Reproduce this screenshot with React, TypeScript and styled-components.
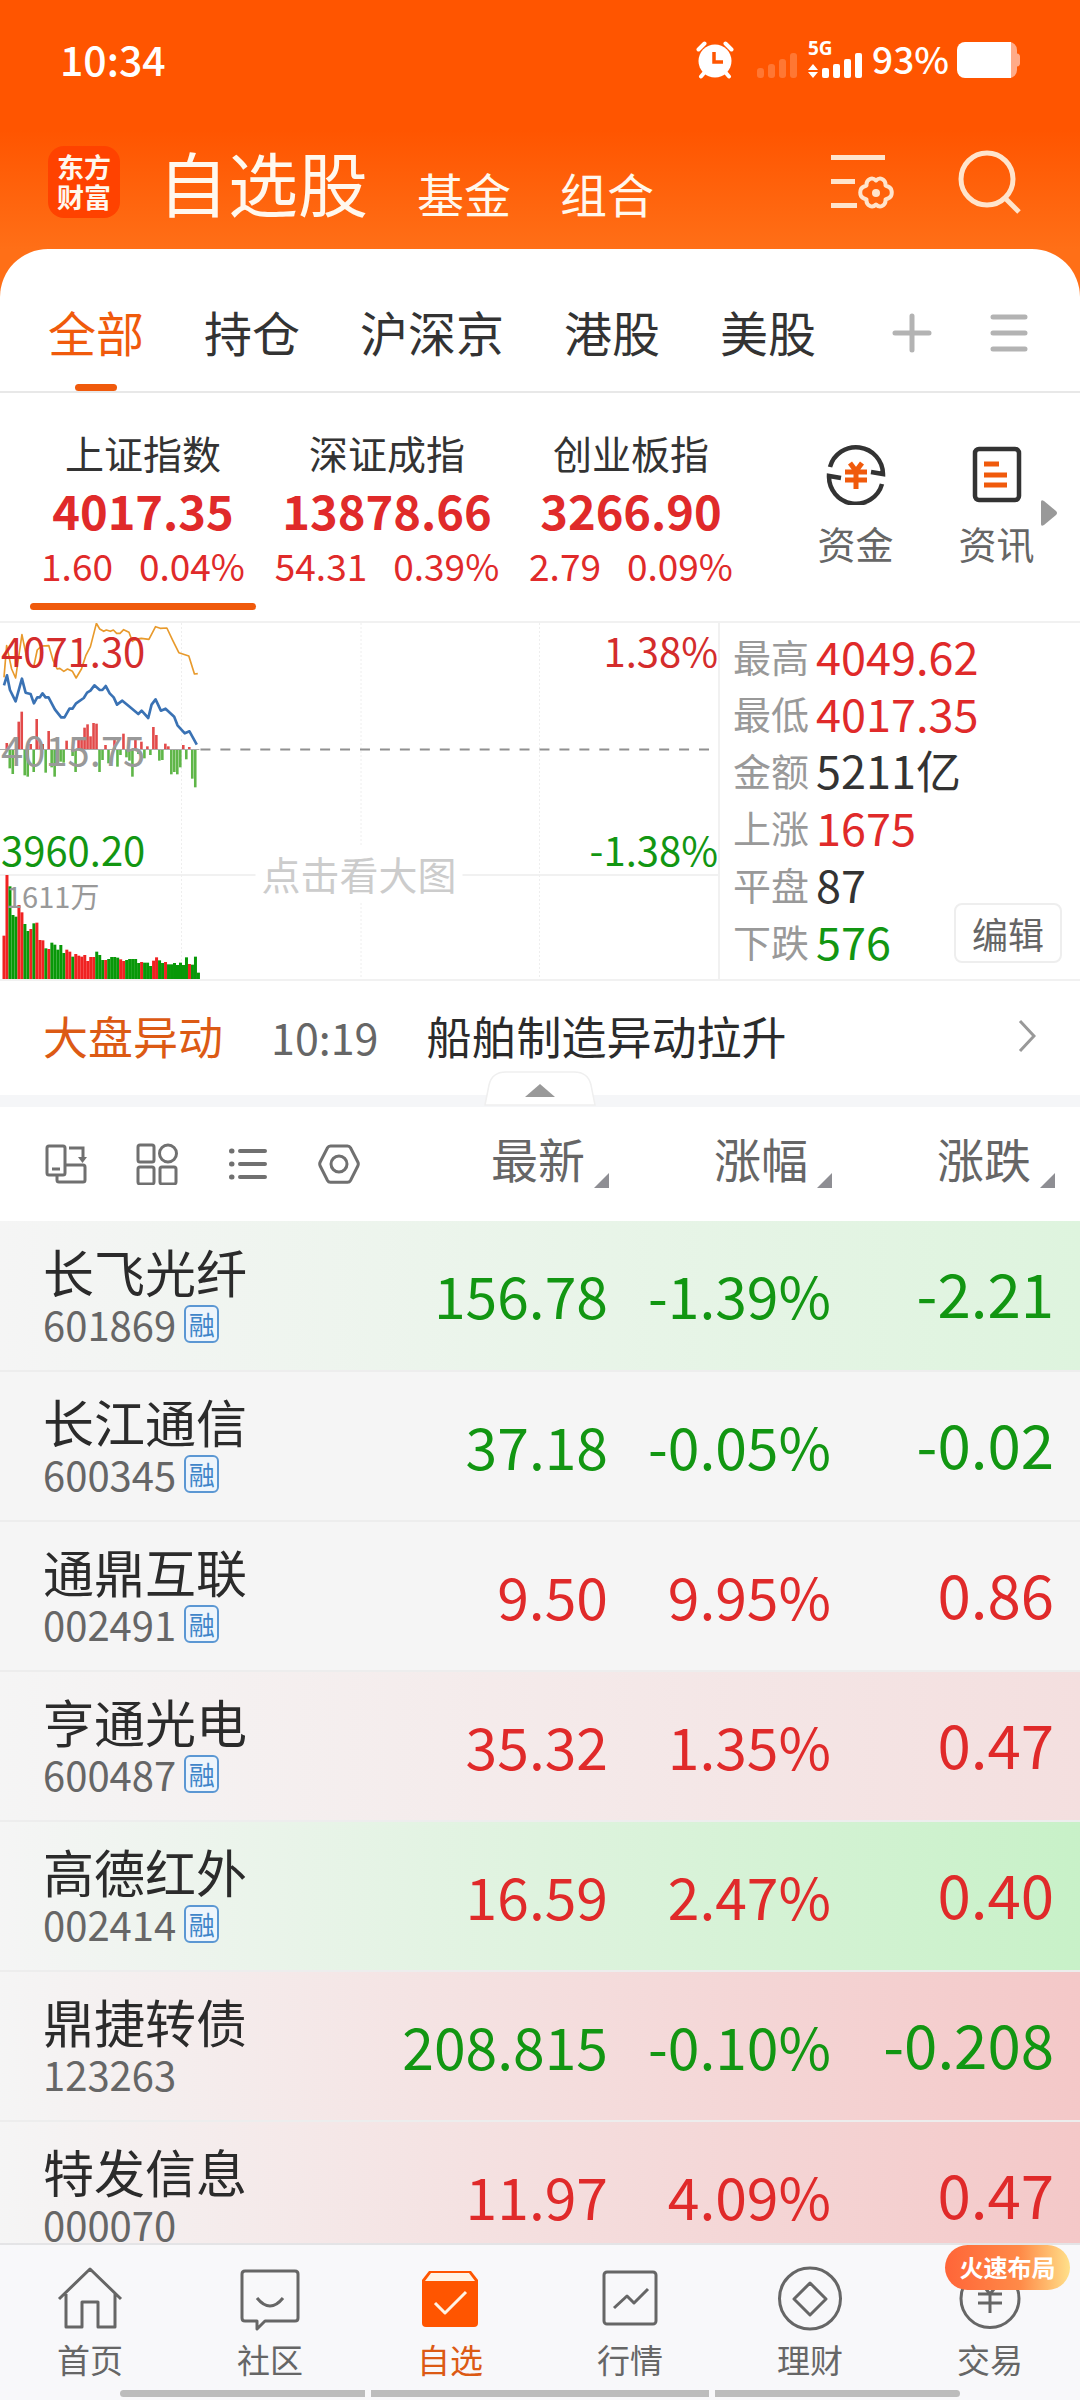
import React from "react";
import styled, { createGlobalStyle } from "styled-components";

const RED = "#e02a2a";
const GREEN = "#129612";
const ORANGE = "#f05a0c";

const GlobalStyle = createGlobalStyle`
  * { box-sizing: border-box; }
  body {
    margin: 0;
    font-family: "Noto Sans CJK SC", "Noto Sans", sans-serif;
    color: #2b2b2b;
  }
  button {
    margin: 0;
    padding: 0;
    border: 0;
    background: none;
    font: inherit;
    color: inherit;
    cursor: pointer;
  }
  a { color: inherit; text-decoration: none; }
  svg { display: block; flex-shrink: 0; }
`;

const Screen = styled.div`
  display: flex;
  flex-direction: column;
  height: 100vh;
  overflow: hidden;
  background: linear-gradient(#ff5500 0, #ff5500 130px, #ff6f17 249px, #ff6f17 300px, #fff 301px);
`;

const StatusBar = styled.div`
  display: flex;
  align-items: center;
  justify-content: space-between;
  flex-shrink: 0;
  height: 120px;
  padding: 0 60px;
  color: #fff;
  font-weight: 500;
  line-height: 60px;
`;

const StatusText = styled.span<{ $large?: boolean }>`
  padding-bottom: 5px;
  font-size: ${(p) => (p.$large ? 41 : 37)}px;
`;

const StatusIcons = styled.div`
  display: flex;
  align-items: center;
  gap: 8px;
  & > svg:first-child { margin-right: 15px; }
`;

const TitleBar = styled.header`
  display: flex;
  align-items: center;
  flex-shrink: 0;
  height: 129px;
  padding: 0 58px 6px 48px;
  color: #fff8ee;
`;

const Logo = styled.div`
  display: flex;
  align-items: center;
  justify-content: center;
  width: 72px;
  height: 72px;
  border-radius: 16px;
  background: #ff4200;
  font-size: 27px;
  font-weight: 700;
  line-height: 30px;
  text-align: center;
`;

const Sections = styled.nav`
  display: flex;
  flex: 1;
  align-items: flex-end;
  gap: 49px;
  margin-left: 38px;
`;

const SectionLink = styled.a<{ $active?: boolean }>`
  font-size: ${(p) => (p.$active ? 70 : 47)}px;
  line-height: ${(p) => (p.$active ? 90 : 68)}px;
`;

const HeaderActions = styled.div`
  display: flex;
  align-items: center;
  gap: 64px;
`;

const Card = styled.main`
  flex: 1;
  min-height: 0;
  overflow-y: auto;
  scrollbar-width: none;
  background: #fff;
  border-radius: 48px 48px 0 0;
`;

const Tabs = styled.nav`
  display: flex;
  align-items: stretch;
  height: 144px;
  padding: 0 52px 0 48px;
  gap: 60px;
  border-bottom: 2px solid #e8e8e8;
  font-size: 48px;
`;

const Tab = styled.button<{ $active?: boolean }>`
  display: flex;
  flex-direction: column;
  align-items: center;
  justify-content: flex-end;
  gap: 18px;
  line-height: 70px;
  white-space: nowrap;
  color: ${(p) => (p.$active ? ORANGE : "#333")};
  &::after {
    content: "";
    width: 42px;
    height: 7px;
    border-radius: 4px;
    background: ${(p) => (p.$active ? ORANGE : "transparent")};
  }
`;

const TabTools = styled.div`
  display: flex;
  flex: 1;
  align-items: center;
  justify-content: flex-end;
  gap: 58px;
  padding-top: 25px;
`;

const Overview = styled.section`
  display: grid;
  grid-template-columns: repeat(3, minmax(0, 244fr)) minmax(0, 327fr);
  height: 228px;
  padding-left: 21px;
`;

const IndexCard = styled.button<{ $active?: boolean }>`
  display: flex;
  flex-direction: column;
  align-items: center;
  justify-content: flex-start;
  padding-top: 31px;
  color: ${RED};
  &::after {
    content: "";
    width: 226px;
    height: 7px;
    margin-top: 12px;
    border-radius: 4px;
    background: ${(p) => (p.$active ? ORANGE : "transparent")};
  }
`;

const IndexName = styled.span`
  font-size: 39px;
  line-height: 56px;
  color: #333;
`;

const IndexValue = styled.strong`
  font-size: 47px;
  font-weight: 700;
  line-height: 59px;
`;

const IndexChange = styled.span`
  display: flex;
  gap: 26px;
  font-size: 37px;
  line-height: 52px;
  white-space: nowrap;
`;

const Shortcuts = styled.div`
  display: flex;
  padding-left: 32px;
`;

const Shortcut = styled.button`
  display: flex;
  width: 141px;
  flex-direction: column;
  align-items: center;
  justify-content: flex-start;
  padding-top: 52px;
  gap: 11px;
  font-size: 38px;
  line-height: 54px;
  color: #666;
`;

const MoreShortcuts = styled.button`
  display: flex;
  align-items: center;
  width: 16px;
  margin-left: -26px;
  padding-top: 12px;
`;

const MarketPanel = styled.section`
  display: grid;
  grid-template-columns: minmax(0, 2fr) minmax(0, 1fr);
  border-top: 2px solid #f1f1f1;
  border-bottom: 2px solid #f1f1f1;
`;

const ChartBox = styled.div`
  position: relative;
  height: 356px;
  border-right: 2px solid #f1f1f1;
`;

const ChartLabel = styled.span<{ $top: number; $right?: boolean; $tone: string; $small?: boolean }>`
  position: absolute;
  top: ${(p) => p.$top}px;
  ${(p) => (p.$right ? "right: 0;" : p.$small ? "left: 6px;" : "left: 1px;")}
  font-size: ${(p) => (p.$small ? 29 : 40)}px;
  line-height: 48px;
  color: ${(p) => p.$tone};
`;

const ChartHint = styled.span`
  position: absolute;
  top: 222px;
  left: 50%;
  padding: 0 6px;
  transform: translateX(-50%);
  background: #fff;
  font-size: 39px;
  line-height: 56px;
  color: #ccc;
  white-space: nowrap;
`;

const Stats = styled.div`
  display: flex;
  justify-content: space-between;
  padding: 4px 18px 8px 13px;
`;

const StatList = styled.dl`
  margin: 0;
`;

const StatRow = styled.div`
  display: flex;
  align-items: center;
  gap: 7px;
  height: 57px;
  white-space: nowrap;
`;

const StatName = styled.dt`
  font-size: 38px;
  color: #999;
`;

const StatValue = styled.dd<{ $tone: string }>`
  margin: 0;
  font-size: 45px;
  line-height: 57px;
  color: ${(p) => p.$tone};
`;

const EditButton = styled.button`
  align-self: flex-end;
  width: 108px;
  height: 60px;
  margin: 0 0 8px -60px;
  border: 2px solid #eee;
  border-radius: 8px;
  background: #fff;
  font-size: 36px;
  line-height: 54px;
  color: #666;
`;

const News = styled.section`
  position: relative;
  display: flex;
  align-items: center;
  height: 126px;
  padding: 0 44px 4px 43px;
  border-bottom: 12px solid #f5f6f8;
  font-size: 45px;
  line-height: 64px;
`;

const NewsTopic = styled.span`
  color: #dc5a14;
`;

const NewsTime = styled.time`
  margin: 0 48px;
  font-size: 43px;
  color: #666;
`;

const NewsTitle = styled.a`
  flex: 1;
`;

const CollapseButton = styled.button`
  position: absolute;
  left: 50%;
  bottom: -11px;
  transform: translateX(-50%);
`;

const Table = styled.table`
  width: 100%;
  table-layout: fixed;
  border-collapse: collapse;
`;

const ToolCell = styled.th`
  padding: 0 0 0 45px;
  text-align: left;
`;

const Tools = styled.div`
  display: flex;
  align-items: center;
  gap: 49px;
`;

const HeadCell = styled.th<{ $last?: boolean }>`
  width: ${(p) => (p.$last ? 248 : 223)}px;
  height: 114px;
  padding: 0 ${(p) => (p.$last ? 25 : 0)}px 12px 0;
  font-weight: 400;
`;

const SortButton = styled.button`
  display: flex;
  width: 100%;
  align-items: flex-end;
  justify-content: flex-end;
  gap: 9px;
  font-size: 47px;
  line-height: 60px;
  color: #666;
  &::after {
    content: "";
    border: solid transparent;
    border-width: 0 0 15px 15px;
    border-bottom-color: #8e8e93;
  }
`;

const Row = styled.tr<{ $tint: string }>`
  height: 150px;
  border-bottom: 2px solid #ededed;
  background: linear-gradient(90deg, #f5f5f5, ${(p) => p.$tint});
`;

const NameCell = styled.td`
  padding: 0 0 4px 43px;
  white-space: nowrap;
`;

const StockName = styled.div`
  font-size: 51px;
  line-height: 60px;
`;

const StockCode = styled.div`
  display: flex;
  align-items: center;
  gap: 8px;
  font-size: 40px;
  line-height: 46px;
  color: #666;
`;

const MarginTag = styled.span`
  display: flex;
  align-items: center;
  justify-content: center;
  width: 35px;
  height: 38px;
  border: 2px solid #5b97d3;
  border-radius: 6px;
  background: #eef5fc;
  font-size: 26px;
  line-height: 30px;
  color: #3f85c9;
`;

const NumCell = styled.td<{ $up: boolean; $last?: boolean }>`
  padding: ${(p) => (p.$last ? "0 26px 7px 0" : "0 1px 3px 0")};
  font-size: ${(p) => (p.$last ? 60 : 57)}px;
  line-height: 72px;
  text-align: right;
  white-space: nowrap;
  color: ${(p) => (p.$up ? RED : GREEN)};
`;

const BottomNav = styled.nav`
  position: relative;
  display: flex;
  flex-shrink: 0;
  height: 157px;
  border-top: 2px solid #e4e4e6;
  background: #f8f8fa;
`;

const NavItem = styled.a<{ $active?: boolean }>`
  position: relative;
  display: flex;
  flex: 1;
  flex-direction: column;
  align-items: center;
  gap: 5px;
  padding-top: 20px;
  font-size: 33px;
  line-height: 46px;
  color: ${(p) => (p.$active ? "#dc5a14" : "#666")};
`;

const Promo = styled.span`
  position: absolute;
  top: 0;
  right: 10px;
  width: 125px;
  height: 45px;
  border-radius: 23px;
  background: linear-gradient(90deg, #ff6538, #ff8a48 60%, #ffe08a);
  font-size: 24px;
  font-weight: 700;
  line-height: 43px;
  text-align: center;
  color: #fff;
`;

const GestureBar = styled.div`
  position: absolute;
  right: 120px;
  bottom: 3px;
  left: 120px;
  display: grid;
  grid-template-columns: 245fr 337fr 245fr;
  gap: 6px;
  height: 7px;
  overflow: hidden;
  border-radius: 4px;
`;

const GesturePart = styled.span`
  background: #bcbcbc;
`;

const AlarmIcon = () => (
  <svg width="38" height="38" viewBox="0 0 38 38">
    <circle cx="19" cy="20" r="16.5" fill="#fff" />
    <path d="M2.500 8.500l6-6M35.500 8.500l-6-6" stroke="#fff" strokeWidth="4" strokeLinecap="round" />
    <path d="M8 32l-3 3.500M30 32l3 3.500" stroke="#fff" strokeWidth="4" strokeLinecap="round" />
    <path d="M18 11v10h9" fill="none" stroke="#ff5500" strokeWidth="3.500" />
  </svg>
);

const SignalIcon = () => (
  <svg width="107" height="54" viewBox="0 -8 107 54">
    <g fill="#fff" fillOpacity=".2">
      <rect x="0" y="27" width="7" height="10" rx="3" />
      <rect x="11" y="23" width="7" height="14" rx="3" />
      <rect x="22" y="18" width="7" height="19" rx="3" />
      <rect x="33" y="12" width="7" height="25" rx="3" />
    </g>
    <g fill="#fff">
      <text x="51" y="14" fontSize="19" fontWeight="700" fontFamily="Open Sans, sans-serif">5G</text>
      <path d="M51 29l5-6 5 6zM51 31l5 6 5-6z" />
      <rect x="65" y="27" width="7" height="10" rx="2" />
      <rect x="76" y="23" width="7" height="14" rx="2" />
      <rect x="87" y="18" width="7" height="19" rx="2" />
      <rect x="98" y="12" width="7" height="25" rx="2" />
    </g>
  </svg>
);

const BatteryIcon = () => (
  <svg width="63" height="36" viewBox="0 0 63 36">
    <path d="M48 0h4a8 8 0 0 1 8 8v3.500c2 0 3 1.500 3 3v7c0 1.500-1 3-3 3V28a8 8 0 0 1-8 8h-4z" fill="#ffab88" />
    <path d="M8 0h46v36H8a8 8 0 0 1-8-8V8a8 8 0 0 1 8-8z" fill="#fff" />
  </svg>
);

const ListGearIcon = () => (
  <svg width="63" height="58" viewBox="0 0 63 58" fill="none" stroke="#ffe4cc" strokeWidth="5">
    <path d="M0 4.500h54M0 28.500h24M0 52.500h26" />
    <path
      d="M45 27.500q3-3 6-1.500 4 2 3.500 6.500 4.500 1.500 5.500 3.500 1.500 4 0 7-1 2-5.500 3.500.5 4.500-3.500 6.500-3 1.500-6-1.500-3 3-6 1.500-4-2-3.500-6.500-4.500-1.500-5.500-3.500-1.500-3.500 0-7 1-2 5.500-3.500-.5-4.500 3.500-6.500 3-1.500 6 1.500z"
      strokeWidth="4"
      strokeLinejoin="round"
    />
    <circle cx="45" cy="40" r="4" fill="#ffe4cc" stroke="none" />
  </svg>
);

const SearchIcon = () => (
  <svg width="64" height="64" viewBox="0 0 64 64" fill="none" stroke="#ffe4cc" strokeWidth="5">
    <circle cx="29" cy="29" r="26" />
    <path d="M47 48l14 14" />
  </svg>
);

const PlusIcon = () => (
  <svg width="40" height="40" viewBox="0 0 40 40" stroke="#b3b3b3" strokeWidth="5" strokeLinecap="round">
    <path d="M20 3v34M3 20h34" />
  </svg>
);

const MenuIcon = () => (
  <svg width="38" height="40" viewBox="0 0 38 40" stroke="#b3b3b3" strokeWidth="5" strokeLinecap="round">
    <path d="M3 4h32M3 20h32M3 36h32" />
  </svg>
);

const FundsIcon = () => (
  <svg width="60" height="60" viewBox="0 0 60 60" fill="none" stroke="#333" strokeWidth="4.500">
    <path d="M4 22A27 27 0 0 1 57 29L45 27" />
    <path d="M56 39A27 27 0 0 1 3 31l12 2" />
    <path d="M24 18l6 8 6-8M19 27h22M19 35h22M30 26v18" stroke={ORANGE} strokeWidth="5" />
  </svg>
);

const ArticleIcon = () => (
  <svg width="60" height="60" viewBox="0 0 60 60" fill="none">
    <rect x="8" y="4" width="44" height="51" rx="4" stroke="#333" strokeWidth="4.500" />
    <path d="M17 19h15M17 30h23M17 40h23" stroke={ORANGE} strokeWidth="5" />
  </svg>
);

const DevicesIcon = () => (
  <svg width="42" height="42" viewBox="0 0 42 42" fill="none" stroke="#707070" strokeWidth="3">
    <rect x="2" y="3" width="18" height="29" rx="2" />
    <path d="M12 32v5q0 2 2 2h24q2 0 2-2V24q0-2-2-2H20M7 26h8M24 5h14v10" />
    <path d="M33 14h9l-4.500 6z" fill="#707070" stroke="none" />
  </svg>
);

const GridIcon = () => (
  <svg width="42" height="42" viewBox="0 0 42 42" fill="none" stroke="#707070" strokeWidth="3">
    <rect x="2" y="2" width="16" height="17" rx="2" />
    <circle cx="32" cy="10.500" r="8.500" />
    <rect x="2" y="24" width="16" height="17" rx="2" />
    <rect x="24" y="24" width="16" height="17" rx="2" />
  </svg>
);

const BulletsIcon = () => (
  <svg width="42" height="42" viewBox="0 0 42 42" stroke="#707070" strokeWidth="4" strokeLinecap="round">
    <path d="M13 8h25M13 21h25M13 34h25" />
    <path d="M4.500 8h.5M4.500 21h.5M4.500 34h.5" strokeWidth="5" />
  </svg>
);

const HexIcon = () => (
  <svg width="42" height="42" viewBox="0 0 42 42" fill="none" stroke="#707070" strokeWidth="3">
    <path d="M12.500 3h17q2 0 3 1.800L39.800 19q1 2 0 4L32.500 37.500q-1 1.800-3 1.800h-17q-2 0-3-1.800L2.200 23q-1-2 0-4L9.500 4.800q1-1.800 3-1.800z" />
    <circle cx="21" cy="21" r="8" />
  </svg>
);

const CollapseIcon = () => (
  <svg width="112" height="35" viewBox="0 0 112 35">
    <path d="M1 34L5 14Q8 1 22 1h68q14 0 17 13l4 20z" fill="#fff" stroke="#efefef" strokeWidth="1.500" />
    <path d="M41 26l15-13 15 13z" fill="#999" />
  </svg>
);

const navIcons: Record<string, React.ReactNode> = {
  首页: <path d="M2 34L33 4l31 30M9 29v33h16V37h16v25h17V29" />,
  社区: <path d="M8 6h50q3 0 3 3v44q0 3-3 3H28l-8 8v-8H8q-3 0-3-3V9q0-3 3-3zM20 33q13 16 26 0" />,
  自选: (
    <>
      <path d="M12 6h42l7 9v43q0 4-4 4H9q-4 0-4-4V15z" fill="#ff5500" stroke="none" />
      <path d="M14 8h38l6 8H8z" fill="#fff3e4" stroke="none" />
      <path d="M18 38l10 10 21-21" stroke="#fff3e4" />
    </>
  ),
  行情: (
    <>
      <rect x="7" y="7" width="52" height="52" rx="3" />
      <path d="M17 43l13-12 7 7 14-14" />
    </>
  ),
  理财: (
    <>
      <circle cx="33" cy="33.500" r="30.500" />
      <path d="M33 18l16 16-16 16-16-16z" />
    </>
  ),
  交易: (
    <>
      <circle cx="33" cy="33.500" r="29" />
      <path d="M24 18l9 11 9-11M21 29h24M21 38h24M33 29v19" />
    </>
  ),
};

const priceLine =
  "12,214 21,184 30,228 47,262 66,194 77,236 92,240 102,268 112,250 120,250 128,238 137,250 146,250 165,286 184,310 194,310 209,284 218,284 229,268 252,252 262,236 272,230 284,214 300,228 308,228 318,216 330,238 342,250 352,272 368,260 390,278 416,300 426,290 446,312 456,272 468,256 484,290 498,284 524,308 534,334 556,358 570,352 592,392";
const averageLine =
  "12,190 20,95 35,165 47,192 66,62 84,148 101,160 112,108 125,96 147,95 160,140 172,165 180,163 192,172 203,165 218,172 229,192 245,165 258,125 272,98 290,28 300,45 312,52 320,48 332,52 341,48 351,58 361,58 372,47 388,55 398,82 410,75 425,73 448,76 468,38 482,43 502,42 520,80 538,116 568,126 585,180 595,179";

/* Minute-by-minute strength: positive above the previous close, negative below. */
const strength = [
  0, 18, -55, -72, 0, 82, 112, -76, -80, 15, -66, 90, 25, 15, -68, 54, -52, -80, -45, -35, -38, 25, 0, -18, -66, 28, 30,
  64, 74, 38, 78, 76, -66, -30, 12, -40, 0, 28, -50, -15, 46, -22, -32, -80, 30, -12, 22, -25, 8, -15, 66, 42, -32, -30,
  16, 8, -73, -66, -73, -52, 12, -28, 6, -86, -112, 0,
];

/* Minute-by-minute volume: positive for rising minutes, negative for falling ones. */
const volume = [
  130, 312, -278, -192, -187, 222, 200, -165, -144, 150, -167, 169, 117, 116, -92, 90, -109, -103, -88, -102, -78, 88,
  82, -67, 75, 70, 67, 72, 54, 66, 66, -82, -72, -57, 57, -60, -66, -66, -64, 59, 54, -57, -60, -60, -60, -48, 51, -49,
  -49, -39, 55, 65, -56, -48, 51, -44, -44, -48, -42, -49, -42, -65, 45, -43, -67, -19,
];

const IndexChart = () => (
  <svg width="100%" height="356" viewBox="0 0 720 356" preserveAspectRatio="none" fill="none">
    <path d="M0 252h720" stroke="#f1f1f1" strokeWidth="2" />
    <path d="M182 0v356M362 0v356M541 0v356" stroke="#eee" strokeDasharray="2 2" />
    <path d="M0 126.500h200" stroke="#aaa" />
    <path d="M201 126.500h512" stroke="#909090" strokeWidth="2" strokeDasharray="10 10" />
    {strength.map((v, i) => (
      <rect
        key={i}
        x={2.5 + i * 3}
        y={v > 0 ? 126 - v / 3 : 127}
        width="2.600"
        height={Math.abs(v) / 3}
        fill={v > 0 ? "#e24a4a" : "#5fb648"}
      />
    ))}
    {volume.map((v, i) => (
      <rect
        key={i}
        x={2.5 + i * 3}
        y={356 - Math.abs(v) / 3}
        width="3"
        height={Math.abs(v) / 3}
        fill={v > 0 ? "#f02222" : "#089808"}
      />
    ))}
    <g transform="translate(0 -9) scale(.33333)">
      <polyline points={averageLine} stroke="#e89a2c" strokeWidth="5" strokeLinejoin="round" />
      <polyline points={priceLine} stroke="#3a72b4" strokeWidth="8" strokeLinejoin="round" />
    </g>
  </svg>
);

const indices = [
  { name: "上证指数", value: "4017.35", change: "1.60", pct: "0.04%" },
  { name: "深证成指", value: "13878.66", change: "54.31", pct: "0.39%" },
  { name: "创业板指", value: "3266.90", change: "2.79", pct: "0.09%" },
];

const stats = [
  ["最高", "4049.62", RED],
  ["最低", "4017.35", RED],
  ["金额", "5211亿", "#333"],
  ["上涨", "1675", RED],
  ["平盘", "87", "#333"],
  ["下跌", "576", GREEN],
];

const stocks = [
  { name: "长飞光纤", code: "601869", margin: true, price: "156.78", pct: "-1.39%", diff: "-2.21", up: false, tint: "#def4de" },
  { name: "长江通信", code: "600345", margin: true, price: "37.18", pct: "-0.05%", diff: "-0.02", up: false, tint: "#f5f5f5" },
  { name: "通鼎互联", code: "002491", margin: true, price: "9.50", pct: "9.95%", diff: "0.86", up: true, tint: "#f5f5f5" },
  { name: "亨通光电", code: "600487", margin: true, price: "35.32", pct: "1.35%", diff: "0.47", up: true, tint: "#f4dfdf" },
  { name: "高德红外", code: "002414", margin: true, price: "16.59", pct: "2.47%", diff: "0.40", up: true, tint: "#c8f1c8" },
  { name: "鼎捷转债", code: "123263", margin: false, price: "208.815", pct: "-0.10%", diff: "-0.208", up: false, tint: "#f4c8c8" },
  { name: "特发信息", code: "000070", margin: false, price: "11.97", pct: "4.09%", diff: "0.47", up: true, tint: "#f4c8c8" },
];

export default function App() {
  return (
    <Screen>
      <GlobalStyle />
      <StatusBar>
        <StatusText $large>10:34</StatusText>
        <StatusIcons>
          <AlarmIcon />
          <SignalIcon />
          <StatusText>93%</StatusText>
          <BatteryIcon />
        </StatusIcons>
      </StatusBar>
      <TitleBar>
        <Logo>
          东方
          <br />
          财富
        </Logo>
        <Sections>
          <SectionLink href="#watchlist" $active>自选股</SectionLink>
          <SectionLink href="#funds">基金</SectionLink>
          <SectionLink href="#portfolio">组合</SectionLink>
        </Sections>
        <HeaderActions>
          <button aria-label="管理"><ListGearIcon /></button>
          <button aria-label="搜索"><SearchIcon /></button>
        </HeaderActions>
      </TitleBar>

      <Card>
        <Tabs>
          {["全部", "持仓", "沪深京", "港股", "美股"].map((t, i) => (
            <Tab key={t} $active={i === 0}>{t}</Tab>
          ))}
          <TabTools>
            <button aria-label="添加分组"><PlusIcon /></button>
            <button aria-label="菜单"><MenuIcon /></button>
          </TabTools>
        </Tabs>

        <Overview>
          {indices.map((x, i) => (
            <IndexCard key={x.name} $active={i === 0}>
              <IndexName>{x.name}</IndexName>
              <IndexValue>{x.value}</IndexValue>
              <IndexChange>
                <span>{x.change}</span>
                <span>{x.pct}</span>
              </IndexChange>
            </IndexCard>
          ))}
          <Shortcuts>
            <Shortcut><FundsIcon />资金</Shortcut>
            <Shortcut><ArticleIcon />资讯</Shortcut>
            <MoreShortcuts aria-label="更多">
              <svg width="16" height="26" viewBox="0 0 16 26"><path d="M0 2q0-3 3-1l12 10q2 2 0 4L3 25q-3 2-3-1z" fill="#999" /></svg>
            </MoreShortcuts>
          </Shortcuts>
        </Overview>

        <MarketPanel>
          <ChartBox>
            <IndexChart />
            <ChartLabel $top={3} $tone="#d42c2c">4071.30</ChartLabel>
            <ChartLabel $top={3} $tone="#d42c2c" $right>1.38%</ChartLabel>
            <ChartLabel $top={102} $tone="#999">4015.75</ChartLabel>
            <ChartLabel $top={202} $tone={GREEN}>3960.20</ChartLabel>
            <ChartLabel $top={202} $tone={GREEN} $right>-1.38%</ChartLabel>
            <ChartLabel $top={248} $tone="#999" $small>1611万</ChartLabel>
            <ChartHint>点击看大图</ChartHint>
          </ChartBox>
          <Stats>
            <StatList>
              {stats.map(([name, value, tone]) => (
                <StatRow key={name}>
                  <StatName>{name}</StatName>
                  <StatValue $tone={tone}>{value}</StatValue>
                </StatRow>
              ))}
            </StatList>
            <EditButton>编辑</EditButton>
          </Stats>
        </MarketPanel>

        <News>
          <NewsTopic>大盘异动</NewsTopic>
          <NewsTime>10:19</NewsTime>
          <NewsTitle href="#news">船舶制造异动拉升</NewsTitle>
          <svg width="18" height="34" viewBox="0 0 18 34" fill="none" stroke="#999" strokeWidth="3">
            <path d="M2 2l14 15L2 32" />
          </svg>
          <CollapseButton aria-label="收起"><CollapseIcon /></CollapseButton>
        </News>

        <Table>
          <thead>
            <tr>
              <ToolCell>
                <Tools>
                  <button aria-label="横屏"><DevicesIcon /></button>
                  <button aria-label="宫格"><GridIcon /></button>
                  <button aria-label="列表"><BulletsIcon /></button>
                  <button aria-label="设置"><HexIcon /></button>
                </Tools>
              </ToolCell>
              <HeadCell><SortButton>最新</SortButton></HeadCell>
              <HeadCell><SortButton>涨幅</SortButton></HeadCell>
              <HeadCell $last><SortButton>涨跌</SortButton></HeadCell>
            </tr>
          </thead>
          <tbody>
            {stocks.map((s) => (
              <Row key={s.code} $tint={s.tint}>
                <NameCell>
                  <StockName>{s.name}</StockName>
                  <StockCode>
                    {s.code}
                    {s.margin && <MarginTag>融</MarginTag>}
                  </StockCode>
                </NameCell>
                <NumCell $up={s.up}>{s.price}</NumCell>
                <NumCell $up={s.up}>{s.pct}</NumCell>
                <NumCell $up={s.up} $last>{s.diff}</NumCell>
              </Row>
            ))}
          </tbody>
        </Table>
      </Card>

      <BottomNav>
        {Object.keys(navIcons).map((label) => (
          <NavItem key={label} href={"#" + label} $active={label === "自选"}>
            <svg width="66" height="66" viewBox="0 0 66 66" fill="none" stroke="#666" strokeWidth="3" strokeLinejoin="round">
              {navIcons[label]}
            </svg>
            {label}
            {label === "交易" && <Promo>火速布局</Promo>}
          </NavItem>
        ))}
        <GestureBar>
          <GesturePart />
          <GesturePart />
          <GesturePart />
        </GestureBar>
      </BottomNav>
    </Screen>
  );
}
